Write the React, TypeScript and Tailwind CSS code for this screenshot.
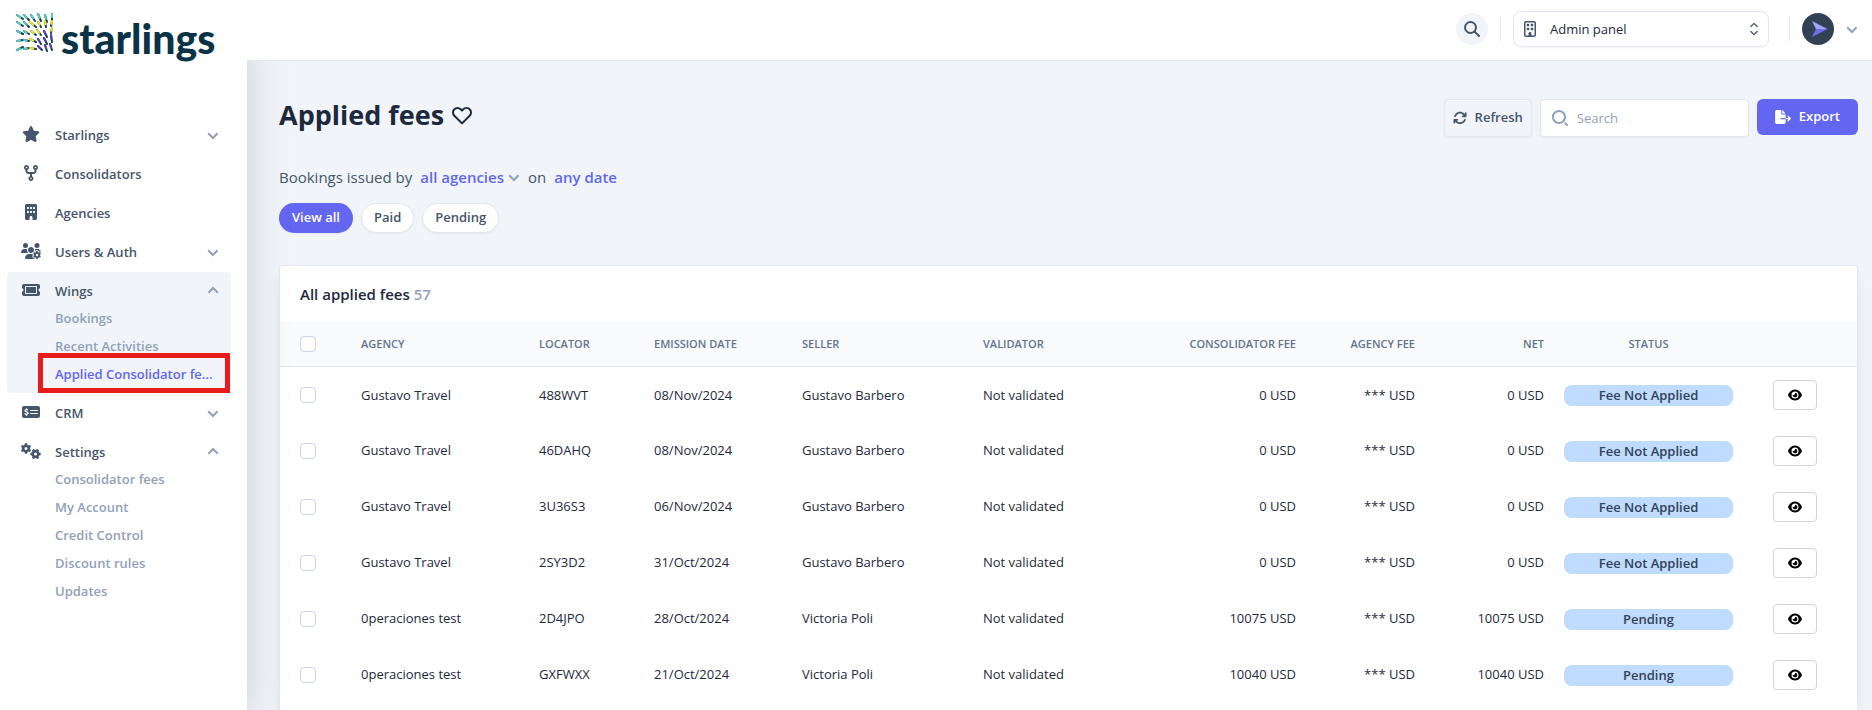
import { useState } from "react"
import type { IconType } from "react-icons"
import {
  FaArrowsRotate,
  FaBuilding,
  FaCodeFork,
  FaEye,
  FaFileExport,
  FaGears,
  FaMoneyCheckDollar,
  FaRegBuilding,
  FaStar,
  FaTicket,
  FaUsersGear,
} from "react-icons/fa6"
import { HiOutlineHeart } from "react-icons/hi"
import { HiChevronUpDown } from "react-icons/hi2"

interface MenuItem {
  label: string
  icon: IconType
  iconWidth: string
  expandable?: boolean
  children?: string[]
}

interface Fee {
  agency: string
  locator: string
  date: string
  seller: string
  amount: string
  status: string
}

const ACTIVE_PAGE = "Applied Consolidator fe..."

const menu: MenuItem[] = [
  { label: "Starlings", icon: FaStar, iconWidth: "w-[18px]", expandable: true },
  { label: "Consolidators", icon: FaCodeFork, iconWidth: "w-4" },
  { label: "Agencies", icon: FaBuilding, iconWidth: "w-4" },
  { label: "Users & Auth", icon: FaUsersGear, iconWidth: "w-5", expandable: true },
  {
    label: "Wings",
    icon: FaTicket,
    iconWidth: "w-[18px]",
    expandable: true,
    children: ["Bookings", "Recent Activities", ACTIVE_PAGE],
  },
  { label: "CRM", icon: FaMoneyCheckDollar, iconWidth: "w-[18px]", expandable: true },
  {
    label: "Settings",
    icon: FaGears,
    iconWidth: "w-5",
    expandable: true,
    children: ["Consolidator fees", "My Account", "Credit Control", "Discount rules", "Updates"],
  },
]

const fees: Fee[] = [
  { agency: "Gustavo Travel", locator: "488WVT", date: "08/Nov/2024", seller: "Gustavo Barbero", amount: "0 USD", status: "Fee Not Applied" },
  { agency: "Gustavo Travel", locator: "46DAHQ", date: "08/Nov/2024", seller: "Gustavo Barbero", amount: "0 USD", status: "Fee Not Applied" },
  { agency: "Gustavo Travel", locator: "3U36S3", date: "06/Nov/2024", seller: "Gustavo Barbero", amount: "0 USD", status: "Fee Not Applied" },
  { agency: "Gustavo Travel", locator: "2SY3D2", date: "31/Oct/2024", seller: "Gustavo Barbero", amount: "0 USD", status: "Fee Not Applied" },
  { agency: "0peraciones test", locator: "2D4JPO", date: "28/Oct/2024", seller: "Victoria Poli", amount: "10075 USD", status: "Pending" },
  { agency: "0peraciones test", locator: "GXFWXX", date: "21/Oct/2024", seller: "Victoria Poli", amount: "10040 USD", status: "Pending" },
]

function Chevron({ up = false }: { up?: boolean }) {
  return (
    <svg className={`w-3 h-3 shrink-0 fill-slate-400 ${up ? "rotate-180" : ""}`} viewBox="0 1 12 12">
      <path d="M5.9 11.4L.5 6l1.4-1.4 4 4 4-4L11.3 6z" />
    </svg>
  )
}

// Flock of small strokes, one per cell of a 6x5 grid
const strokes = [
  [0, 1, 6, 5, "t"], [7, 1, 12, 6, "t"], [14, 1, 18, 7, "t"], [21, 0, 24, 7, "t"], [28, 1, 30, 8, "t"], [35, 0, 35, 6, "t"],
  [0, 8, 6, 12, "t"], [7, 8, 12, 13, "t"], [13, 8, 19, 13, "y"], [21, 8, 24, 13, "y"], [28, 7, 29, 13, "y"], [35, 7, 34, 12, "y"],
  [0, 17, 6, 20, "t"], [7, 17, 12, 20, "t"], [14, 17, 19, 21, "y"], [20, 16, 24, 21, "y"], [27, 17, 30, 23, "p"], [35, 14, 34, 19, "y"],
  [0, 27, 6, 26, "t"], [7, 26, 12, 27, "t"], [13, 25, 19, 28, "y"], [21, 25, 24, 30, "p"], [27, 24, 30, 30, "p"], [34, 21, 35, 28, "p"],
  [0, 36, 6, 33, "t"], [7, 35, 12, 34, "t"], [13, 34, 19, 35, "y"], [21, 32, 25, 36, "p"], [28, 31, 30, 37, "p"], [33, 30, 35, 36, "p"],
] as const

function Logo() {
  return (
    <a href="#" className="flex gap-2 items-start h-12 text-[#0b3347]" aria-label="starlings">
      <svg className="w-9 h-[38px] shrink-0 overflow-visible" viewBox="0 0 36 38" strokeWidth="2">
        {strokes.map(([x1, y1, x2, y2, tone]) => (
          <g key={`${x1}-${y1}`}>
            <line x1={x1} y1={y1} x2={x2} y2={y2} stroke="#0b3f4c" strokeLinecap="round" />
            <line
              x1={x1}
              y1={y1}
              x2={x1 + (x2 - x1) * 0.55}
              y2={y1 + (y2 - y1) * 0.55}
              stroke={tone === "t" ? "#5cc8c2" : tone === "y" ? "#f2e52b" : "#5a3fc0"}
              strokeLinecap="round"
            />
          </g>
        ))}
      </svg>
      <span className="font-['Lato',sans-serif] font-black text-[41px] leading-[50px]">starlings</span>
    </a>
  )
}

function Sidebar() {
  return (
    <aside className="relative z-10 w-[247px] shrink-0 bg-white shadow-2xl">
      <div className="pl-[17px] pt-[14px] pb-[54px]">
        <Logo />
      </div>
      <nav className="pl-[7px] pr-4">
        <ul>
          {menu.map(item => {
            const Icon = item.icon
            const active = item.children?.includes(ACTIVE_PAGE)
            return (
              <li
                key={item.label}
                className={`mb-px pt-[9px] pl-3 rounded-sm ${item.children ? "pb-[5px]" : "pb-[9px]"} ${active ? "bg-slate-100" : ""}`}
              >
                <button type="button" className="flex items-center w-full pr-3 gap-3 text-left">
                  <span className="flex justify-center w-6 pb-0.5 text-slate-600">
                    <Icon className={`h-4 ${item.iconWidth}`} />
                  </span>
                  <span className="flex-1 text-[13px] leading-5 font-semibold text-slate-600">{item.label}</span>
                  {item.expandable && <Chevron up={!!item.children} />}
                </button>
                {item.children && (
                  <ul className="mt-[3px] pl-9">
                    {item.children.map(child => (
                      <li key={child} className="relative h-7 flex items-center">
                        <a
                          href="#"
                          className={`text-[13px] leading-5 font-semibold whitespace-nowrap ${child === ACTIVE_PAGE ? "text-[#6366f1]" : "text-slate-400"}`}
                        >
                          {child}
                        </a>
                        {child === ACTIVE_PAGE && (
                          <span className="absolute -left-[17px] right-px -top-[7px] -bottom-[5px] border-5 border-[#e81c1c] pointer-events-none" />
                        )}
                      </li>
                    ))}
                  </ul>
                )}
              </li>
            )
          })}
        </ul>
      </nav>
    </aside>
  )
}

function SearchGlyph({ className }: { className: string }) {
  return (
    <svg className={className} viewBox="0 0 16 16">
      <path d="M7 14c-3.86 0-7-3.14-7-7s3.14-7 7-7 7 3.14 7 7-3.14 7-7 7zM7 2C4.243 2 2 4.243 2 7s2.243 5 5 5 5-2.243 5-5-2.243-5-5-5z" />
      <path d="M15.707 14.293L13.314 11.9a8.019 8.019 0 01-1.414 1.414l2.393 2.393a.997.997 0 001.414 0 .999.999 0 000-1.414z" />
    </svg>
  )
}

function Header() {
  return (
    <header className="relative z-20 flex items-center justify-end h-[61px] pr-[14px] pb-[3px] bg-white border-b border-slate-200">
      <button type="button" aria-label="Search" className="flex items-center justify-center w-8 h-8 rounded-full bg-slate-100">
        <svg className="w-4 h-4" viewBox="0 0 16 16" fill="none" stroke="#475569" strokeWidth="2" strokeLinecap="round">
          <circle cx="6.5" cy="6.5" r="5.5" />
          <path d="M10.6 10.6L15 15" />
        </svg>
      </button>
      <span className="w-px h-6 mx-3 bg-slate-200" />
      <div className="relative w-64">
        <FaRegBuilding className="absolute left-[9px] top-[10px] w-4 h-4 text-slate-600 pointer-events-none" />
        <select
          aria-label="Panel"
          className="w-full h-9 pl-9 pr-8 pt-0.5 appearance-none bg-white border border-slate-200 rounded-lg shadow-xs text-[13px] text-slate-800"
        >
          <option>Admin panel</option>
        </select>
        <HiChevronUpDown className="absolute right-[5px] top-2 text-xl text-slate-600 pointer-events-none" />
      </div>
      <span className="w-px h-6 ml-5 mr-3 bg-slate-200" />
      <button type="button" aria-label="Account" className="flex items-center gap-3">
        <svg className="w-8 h-8" viewBox="0 0 32 32">
          <circle cx="16" cy="16" r="16" fill="#334155" />
          <path d="M10 8l15.500 8L14 16z" fill="#a5a4fb" />
          <path d="M10 24l15.500-8L14 16z" fill="#6f6cf0" />
        </svg>
        <Chevron />
      </button>
    </header>
  )
}

export default function App() {
  const [filter, setFilter] = useState("View all")

  return (
    <div className="flex min-h-screen bg-slate-100 text-slate-800 font-['Open_Sans','Noto_Sans',sans-serif]">
      <Sidebar />
      <div className="flex flex-col flex-1 min-w-0">
        <Header />
        <main className="flex flex-col flex-1 pl-8 pr-[14px] pt-[38px]">
          {/* Title and actions */}
          <div className="flex justify-between items-start mb-7">
            <h1 className="flex items-center gap-1.5 text-[27px] leading-8 font-bold">
              Applied fees
              <button type="button" aria-label="Add to favourites">
                <HiOutlineHeart className="w-6 h-6" />
              </button>
            </h1>
            <div className="flex items-start gap-2">
              <button
                type="button"
                className="flex items-center gap-2 h-[38px] px-2 border border-slate-200 rounded-sm shadow-xs text-[13px] font-semibold text-slate-600"
              >
                <FaArrowsRotate className="text-sm" />
                Refresh
              </button>
              <div className="relative">
                <SearchGlyph className="absolute left-3 top-[11px] w-4 h-4 fill-slate-400 pointer-events-none" />
                <input
                  type="search"
                  aria-label="Search fees"
                  placeholder="Search"
                  className="w-[209px] h-[38px] pl-9 pr-3 bg-white border border-slate-200 rounded-sm shadow-xs text-[13px] placeholder:text-slate-400"
                />
              </div>
              <button type="button" className="flex items-center gap-2 h-9 px-[18px] rounded-md bg-[#6366f1] text-[13px] font-semibold text-white">
                <FaFileExport className="w-4 h-[14px]" />
                Export
              </button>
            </div>
          </div>

          {/* Filters */}
          <div className="flex items-center text-[15px] leading-6 text-slate-600">
            Bookings issued by
            <button type="button" className="flex items-center gap-1 mx-2 font-semibold text-[#6366f1]">
              all agencies
              <Chevron />
            </button>
            on
            <button type="button" className="ml-2 font-semibold text-[#6366f1]">any date</button>
          </div>
          <div className="flex gap-2 mt-[14px] mb-8">
            {["View all", "Paid", "Pending"].map(name => (
              <button
                key={name}
                type="button"
                onClick={() => setFilter(name)}
                className={`h-[30px] px-3 rounded-full border text-[13px] font-semibold shadow-xs ${
                  filter === name ? "bg-[#6366f1] border-transparent text-white" : "bg-white border-slate-200 text-slate-600"
                }`}
              >
                {name}
              </button>
            ))}
          </div>

          {/* Fees table */}
          <section className="flex-1 bg-white border border-b-0 border-slate-200 rounded-t-sm shadow-lg">
            <h2 className="px-5 py-4 text-[15px] leading-6 font-semibold">
              All applied fees <span className="text-slate-400">57</span>
            </h2>
            <table className="w-full table-fixed text-[13px]">
              <colgroup>
                <col className="w-[71px]" />
                <col className="w-[178px]" />
                <col className="w-[115px]" />
                <col className="w-[148px]" />
                <col className="w-[181px]" />
                <col className="w-[183px]" />
                <col className="w-[150px]" />
                <col className="w-[119px]" />
                <col className="w-[129px]" />
                <col className="w-[189px]" />
                <col className="w-[114px]" />
              </colgroup>
              <thead className="bg-slate-50 border-b border-slate-200 text-[11px] uppercase text-slate-500 text-left whitespace-nowrap">
                <tr className="h-11 *:px-[10px] *:font-semibold">
                  <th>
                    <input type="checkbox" aria-label="Select all" className="block w-4 h-4 ml-[10px] appearance-none bg-white border border-slate-300 rounded-sm" />
                  </th>
                  <th>Agency</th>
                  <th>Locator</th>
                  <th>Emission date</th>
                  <th>Seller</th>
                  <th>Validator</th>
                  <th className="text-right">Consolidator fee</th>
                  <th className="text-right">Agency fee</th>
                  <th className="text-right">Net</th>
                  <th className="text-center">Status</th>
                  <th aria-label="Actions"></th>
                </tr>
              </thead>
              <tbody>
                {fees.map(fee => (
                  <tr key={fee.locator} className="h-14 *:px-[10px] *:pt-0.5 whitespace-nowrap">
                    <td>
                      <input type="checkbox" aria-label={`Select ${fee.locator}`} className="block w-4 h-4 ml-[10px] appearance-none bg-white border border-slate-300 rounded-sm" />
                    </td>
                    <td>{fee.agency}</td>
                    <td>{fee.locator}</td>
                    <td>{fee.date}</td>
                    <td>{fee.seller}</td>
                    <td>Not validated</td>
                    <td className="text-right">{fee.amount}</td>
                    <td className="text-right">*** USD</td>
                    <td className="text-right">{fee.amount}</td>
                    <td>
                      <div className="h-[21px] rounded-lg bg-[#bfdbfe] text-center leading-[21px] font-semibold text-slate-700">{fee.status}</div>
                    </td>
                    <td>
                      <button
                        type="button"
                        aria-label={`View ${fee.locator}`}
                        className="flex items-center justify-center w-11 h-[30px] ml-5 border border-gray-300 rounded-sm text-sm text-black"
                      >
                        <FaEye />
                      </button>
                    </td>
                  </tr>
                ))}
              </tbody>
            </table>
          </section>
        </main>
      </div>
    </div>
  )
}
